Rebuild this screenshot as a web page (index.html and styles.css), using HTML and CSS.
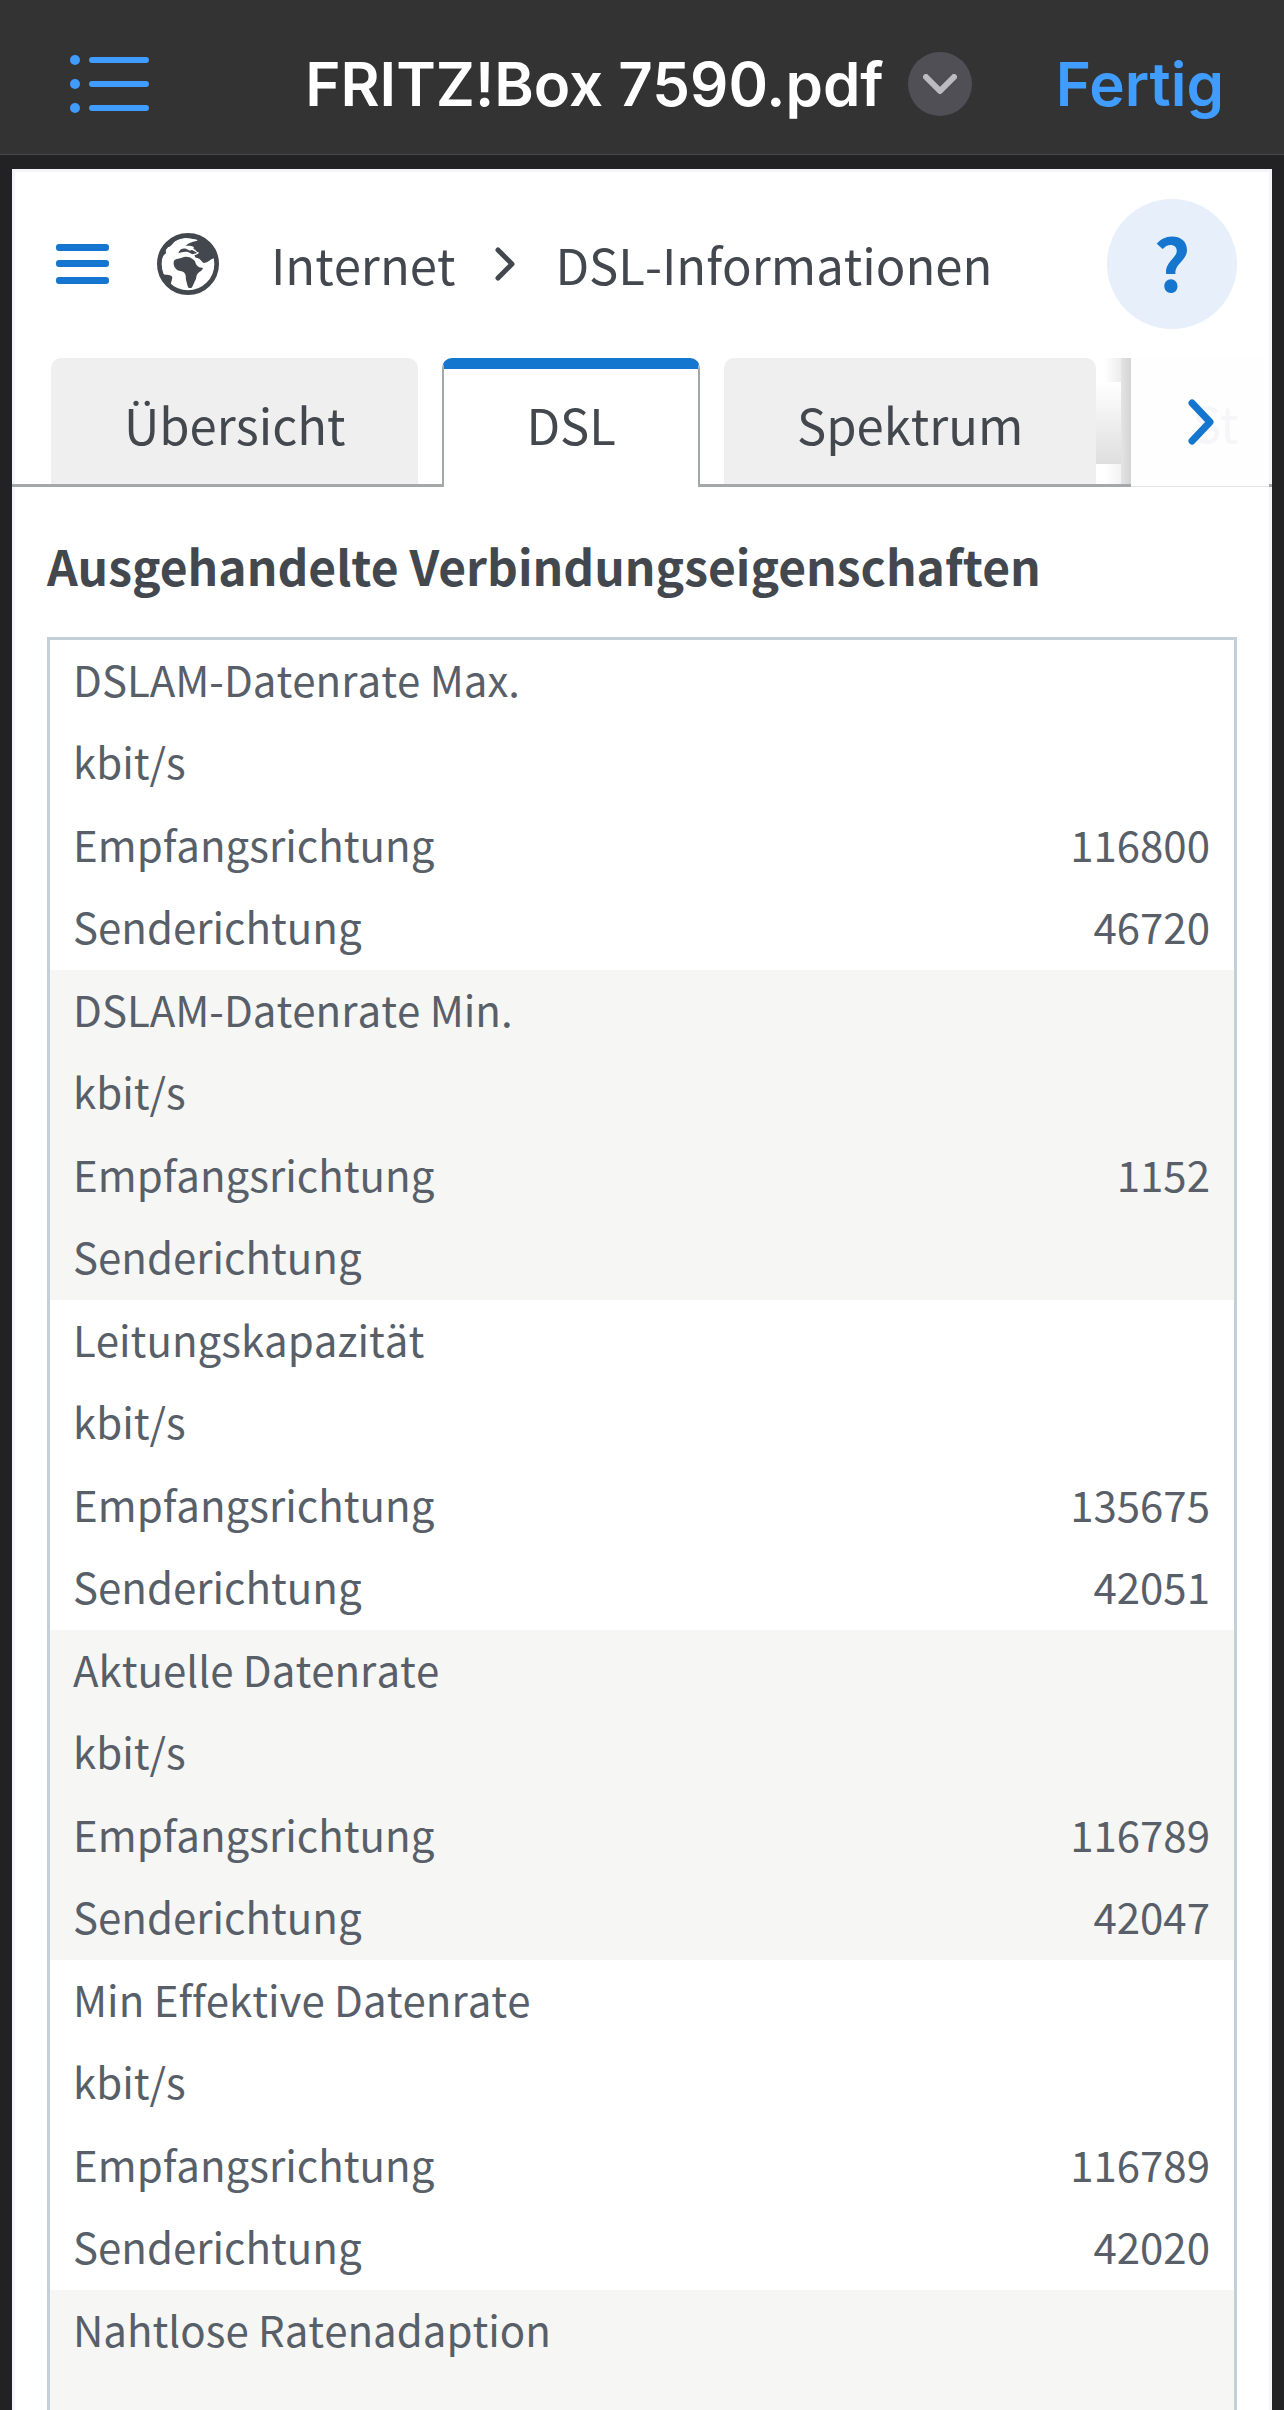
FILE: index.html
```html
<!DOCTYPE html>
<html lang="de">
<head>
    <meta charset="UTF-8">
    <meta name="viewport" content="width=device-width, initial-scale=1.0">
    <title>FRITZ!Box 7590.pdf</title>
    <link rel="stylesheet" href="styles.css">
</head>
<body>

    <!-- Leiste der PDF-Ansicht -->
    <header class="toolbar">
        <button class="toolbar-list" type="button" aria-label="Inhalt">
            <svg width="79" height="58" viewBox="0 0 79 58">
                <g fill="#409cff">
                    <circle cx="5" cy="5" r="5"/>
                    <circle cx="5" cy="29" r="5"/>
                    <circle cx="5" cy="53" r="5"/>
                    <rect x="19" y="2" width="60" height="6" rx="3"/>
                    <rect x="19" y="26" width="60" height="6" rx="3"/>
                    <rect x="19" y="50" width="60" height="6" rx="3"/>
                </g>
            </svg>
        </button>
        <div class="toolbar-title">
            <h1>FRITZ!Box 7590.pdf</h1>
            <button class="title-menu" type="button" aria-label="Dokumentmenü">
                <svg width="34" height="20" viewBox="0 0 34 20">
                    <path d="M3 3 L17 17 L31 3" fill="none" stroke="#bcbbc1" stroke-width="6" stroke-linecap="round" stroke-linejoin="round"/>
                </svg>
            </button>
        </div>
        <button class="toolbar-done" type="button">Fertig</button>
    </header>

    <main class="viewer">
        <div class="page">

            <!-- Kopfzeile mit Menü und Pfad -->
            <div class="page-head">
                <button class="menu-icon" type="button" aria-label="Menü">
                    <svg width="53" height="40" viewBox="0 0 53 40">
                        <g fill="#1476cf">
                            <rect width="53" height="7" rx="3"/>
                            <rect y="16" width="53" height="7" rx="3"/>
                            <rect y="33" width="53" height="7" rx="3"/>
                        </g>
                    </svg>
                </button>
                <svg class="globe" width="62" height="62" viewBox="0 0 186 186">
                    <circle cx="93" cy="93" r="86" fill="#fff" stroke="#43484f" stroke-width="14"/>
                    <g fill="#43484f">
                        <path d="M121 23 C112 25 103 27 98 30 C92 33 88 37 85 39 C93 37 103 38 111 42 C108 46 109 48 115 50 C117 54 119 56 125 58 C127 63 119 65 112 67 L116 74 C124 74 132 80 136 87 C140 92 146 89 152 86 C160 83 164 76 171 76 L180 84 C178 44 148 5 93 5 C62 6 32 24 18 50 L12 84 C17 70 20 66 27 61 C26 54 26 48 30 43 L38 41 C48 34 50 22 68 17 C82 13 96 15 108 18 C120 19 122 21 121 23 Z"/>
                        <path d="M64 61 C66 50 76 44 87 47 L99 53 C101 50 107 50 111 54 L121 60 L106 64 L93 57 C84 55 72 58 64 61 Z"/>
                        <path d="M52 82 C58 76 68 77 75 74 C83 70 91 71 98 73 C105 77 109 80 114 85 C116 94 120 99 127 103 L138 105 C137 112 128 116 123 121 C117 127 119 133 116 140 C111 147 109 159 103 165 L95 165 C90 157 90 149 87 141 C86 133 88 126 82 119 C75 112 65 117 58 109 C51 102 47 91 52 82 Z"/>
                        <path d="M11 121 C22 128 31 123 43 129 C49 134 44 139 44 144 C39 153 43 161 51 170 C30 161 17 143 11 121 Z"/>
                    </g>
                </svg>
                <nav class="breadcrumb">
                    <a href="#internet">Internet</a>
                    <svg width="20" height="34" viewBox="0 0 20 34">
                        <path d="M3 3 L17 17 L3 31" fill="none" stroke="#43484f" stroke-width="5" stroke-linecap="round" stroke-linejoin="round"/>
                    </svg>
                    <a href="#dsl-info">DSL-Informationen</a>
                </nav>
                <button class="help" type="button">?</button>
            </div>

            <nav class="tabs">
                <a class="tab" href="#uebersicht">Übersicht</a>
                <a class="tab active" href="#dsl">DSL</a>
                <a class="tab" href="#spektrum">Spektrum</a>
                <button class="tabs-next" type="button" aria-label="Weitere Reiter">
                    <svg width="26" height="46" viewBox="0 0 26 46">
                        <path d="M4 4 L22 23 L4 42" fill="none" stroke="#1476cf" stroke-width="7" stroke-linecap="round" stroke-linejoin="round"/>
                    </svg>
                    <span class="tab-hint">St</span>
                </button>
            </nav>

            <section class="content">
                <h2>Ausgehandelte Verbindungseigenschaften</h2>
                <table class="values">
                    <tbody>
                        <tr>
                            <th scope="row">DSLAM-Datenrate Max.</th>
                            <td>kbit/s</td>
                            <td><span>Empfangsrichtung</span><span>116800</span></td>
                            <td><span>Senderichtung</span><span>46720</span></td>
                        </tr>
                        <tr>
                            <th scope="row">DSLAM-Datenrate Min.</th>
                            <td>kbit/s</td>
                            <td><span>Empfangsrichtung</span><span>1152</span></td>
                            <td><span>Senderichtung</span></td>
                        </tr>
                        <tr>
                            <th scope="row">Leitungskapazität</th>
                            <td>kbit/s</td>
                            <td><span>Empfangsrichtung</span><span>135675</span></td>
                            <td><span>Senderichtung</span><span>42051</span></td>
                        </tr>
                        <tr>
                            <th scope="row">Aktuelle Datenrate</th>
                            <td>kbit/s</td>
                            <td><span>Empfangsrichtung</span><span>116789</span></td>
                            <td><span>Senderichtung</span><span>42047</span></td>
                        </tr>
                        <tr>
                            <th scope="row">Min Effektive Datenrate</th>
                            <td>kbit/s</td>
                            <td><span>Empfangsrichtung</span><span>116789</span></td>
                            <td><span>Senderichtung</span><span>42020</span></td>
                        </tr>
                        <tr>
                            <th scope="row">Nahtlose Ratenadaption</th>
                            <td></td>
                        </tr>
                    </tbody>
                </table>
            </section>
        </div>
    </main>

</body>
</html>
```
FILE: styles.css
```css
* {
    margin: 0;
    padding: 0;
    box-sizing: border-box;
}

body {
    display: flex;
    flex-direction: column;
    height: 100vh;
    overflow: hidden;
    background-color: #222224;
    font-family: "Noto Sans CJK SC", "Open Sans", sans-serif;
    font-kerning: none;
    font-variant-ligatures: none;
    color: #43484f;
}

button {
    border: none;
    background: none;
    font-family: inherit;
    cursor: pointer;
}

a {
    color: inherit;
    text-decoration: none;
}

svg {
    display: block;
    flex-shrink: 0;
}

/* Leiste der PDF-Ansicht */
.toolbar {
    display: flex;
    align-items: center;
    justify-content: space-between;
    flex-shrink: 0;
    height: 155px;
    padding: 14px 60px 0 70px;
    background-color: #333;
    border-bottom: 1px solid #48484a;
    font-family: Inter, sans-serif;
    font-kerning: normal;
}

.toolbar-title {
    display: flex;
    align-items: center;
    gap: 24px;
    margin-left: 72px;
}

.toolbar h1,
.toolbar-done {
    font-size: 60px;
    font-weight: 600;
    line-height: 72px;
}

.toolbar h1 {
    color: #fff;
}

.toolbar-done {
    color: #409cff;
}

.title-menu {
    display: flex;
    align-items: center;
    justify-content: center;
    width: 64px;
    height: 64px;
    border-radius: 50%;
    background-color: #504f55;
}

.viewer {
    flex: 1;
    min-height: 0;
    padding: 14px 12px 0;
    overflow: hidden;
}

.page {
    background-color: #fff;
    box-shadow: inset 0 0 0 3px #f5f4f9;
}

/* Kopfzeile */
.page-head {
    display: flex;
    align-items: center;
    height: 189px;
    padding: 0 35px 0 44px;
}

.globe {
    margin-left: 48px;
}

.breadcrumb {
    display: flex;
    align-items: center;
    gap: 40px;
    margin-left: 52px;
    font-size: 49px;
    line-height: 60px;
}

.help {
    width: 130px;
    height: 130px;
    margin-left: auto;
    padding-bottom: 6px;
    border-radius: 50%;
    background-color: #e6effa;
    color: #1476cf;
    font-size: 72px;
    font-weight: 700;
    line-height: 120px;
}

/* Reiter */
.tabs {
    position: relative;
    display: flex;
    gap: 24px;
    height: 129px;
    padding-left: 39px;
    border-bottom: 3px solid #a4a8a8;
}

.tab {
    height: 126px;
    padding: 0 73px;
    border-radius: 10px 10px 0 0;
    background-color: #efefef;
    font-size: 49px;
    line-height: 132px;
}

.tab.active {
    height: 129px;
    padding: 0 82px;
    border: 2px solid #a4a8a8;
    border-top: 11px solid #1476cf;
    border-bottom: none;
    background-color: #fff;
    line-height: 110px;
}

/* liegt über den restlichen Reitern */
.tabs-next {
    position: absolute;
    top: 0;
    right: 3px;
    display: flex;
    align-items: center;
    width: 138px;
    height: 129px;
    padding-left: 57px;
    border-bottom: 1px solid #e4e6e6;
    background-color: #fefefe;
}

.tabs-next::before {
    content: "";
    position: absolute;
    top: 0;
    right: 100%;
    width: 35px;
    height: 126px;
    background:
        linear-gradient(to right, #e4e4e4, #d4d4d4) right top / 10px 126px no-repeat,
        linear-gradient(to right, #fff, #e2e2e2) right top / 27px 24px no-repeat,
        linear-gradient(#fff, #dedede) left 24px / 35px 82px no-repeat,
        linear-gradient(to right, #fff, #ececec) right bottom / 27px 20px no-repeat;
}

.tab-hint {
    margin-left: -22px;
    color: #f6f6f9;
    font-size: 49px;
    line-height: 60px;
}

.tabs-next svg {
    z-index: 1;
}

/* Werte */
.content {
    padding: 48px 35px 0;
}

.content h2 {
    margin-bottom: 42px;
    font-size: 48px;
    font-weight: 700;
    font-kerning: normal;
    line-height: 60px;
}

.values {
    display: block;
    border: 3px solid #c3d0d9;
    color: #585f69;
    font-size: 42px;
    line-height: 60px;
}

.values tbody {
    display: block;
}

.values tr {
    display: grid;
    grid-template-rows: repeat(4, 1fr);
    height: 330px;
    padding: 0 24px 0 23px;
}

.values tr:nth-child(even) {
    background-color: #f6f6f4;
}

.values th,
.values td {
    display: flex;
    align-items: center;
    justify-content: space-between;
    padding-bottom: 5px;
    font-weight: 400;
}
```
